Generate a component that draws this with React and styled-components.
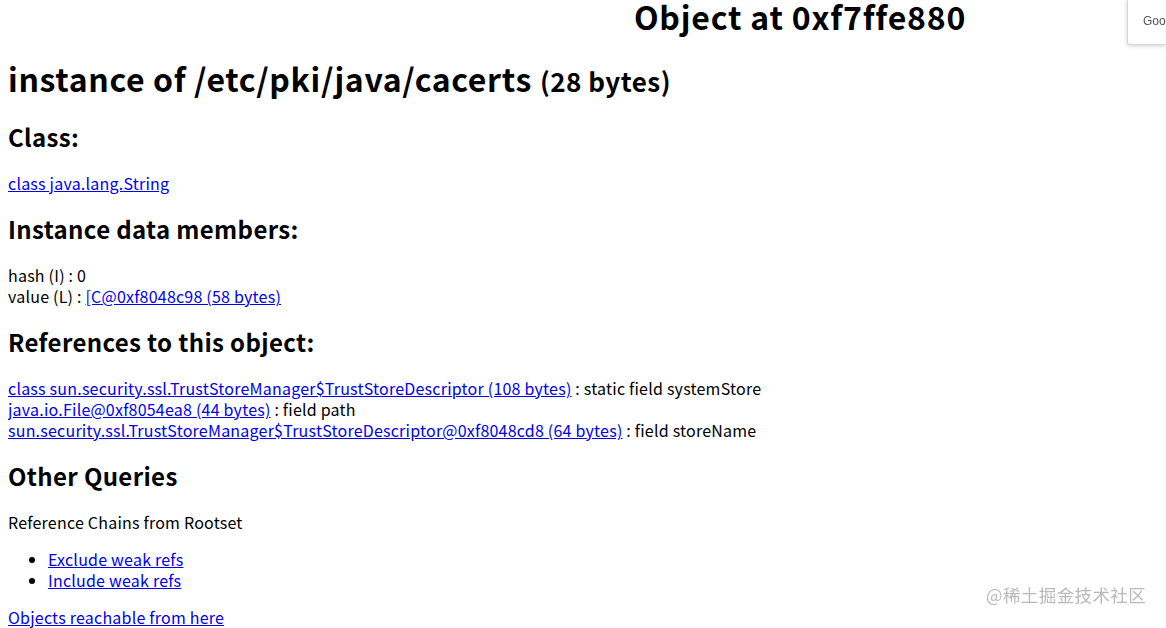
import React from "react";
import styled, { createGlobalStyle } from "styled-components";

const Global = createGlobalStyle`
  html, body { margin: 0; padding: 0; background: #fff; }
  body {
    margin: 0 8px;
    font-family: "Noto Sans CJK SC", "Noto Sans", sans-serif;
    font-size: 16px;
    line-height: 21px;
    letter-spacing: 0.22px;
    color: #000;
    overflow: hidden;
  }
`;

const Page = styled.div`
  position: relative;
  min-height: 628px;
  padding-top: 1px;
`;

const TopTitle = styled.h1`
  margin: -6px 0 0;
  padding-left: 434px;
  text-align: center;
  font-size: 32px;
  line-height: 42px;
  font-weight: 700;
  letter-spacing: 0.8px;
`;

const Title = styled.h1`
  margin: 20px 0 17px;
  font-size: 32px;
  line-height: 42px;
  font-weight: 700;
  letter-spacing: 0.65px;
`;

const Small = styled.small`
  font-size: 26px;
  letter-spacing: 0.5px;
`;

const Heading = styled.h2`
  margin: 19px 0 20px;
  font-size: 24px;
  line-height: 32px;
  font-weight: 700;
  letter-spacing: 0.35px;
`;

const Link = styled.a`
  color: #0000ee;
  text-decoration: underline;
`;

const List = styled.ul`
  margin: 16px 0;
  padding-left: 40px;
  list-style: disc;
`;

const TranslateBox = styled.div`
  position: fixed;
  top: -2px;
  right: 0;
  width: 39px;
  height: 47px;
  background: #fff;
  border: 1px solid #d6d6d6;
  border-right: none;
  border-radius: 3px 0 0 3px;
  box-shadow: 0 1px 4px rgba(0,0,0,0.18);
  font-family: "Liberation Sans", Arial, sans-serif;
  font-size: 12px;
  letter-spacing: 0;
  color: #555;
  display: flex;
  align-items: center;
  padding-left: 15px;
  box-sizing: border-box;
  overflow: hidden;
  white-space: nowrap;
`;

const Watermark = styled.div`
  position: fixed;
  left: 986px;
  top: 584px;
  font-family: "Noto Sans CJK SC", sans-serif;
  font-size: 17.5px;
  color: #b9b9b9;
  letter-spacing: 0.4px;
`;

export default function App() {
  return (
    <>
      <Global />
      <Page>
        <TopTitle>Object at 0xf7ffe880</TopTitle>
        <Title>
          instance of /etc/pki/java/cacerts <Small>(28 bytes)</Small>
        </Title>

        <Heading>Class:</Heading>
        <Link href="#">class java.lang.String</Link>
        <br />

        <Heading>Instance data members:</Heading>
        hash (I) : 0
        <br />
        value (L) : <Link href="#">[C@0xf8048c98 (58 bytes)</Link>
        <br />

        <Heading>References to this object:</Heading>
        <Link href="#">class sun.security.ssl.TrustStoreManager$TrustStoreDescriptor (108 bytes)</Link> : static field systemStore
        <br />
        <Link href="#">java.io.File@0xf8054ea8 (44 bytes)</Link> : field path
        <br />
        <Link href="#">sun.security.ssl.TrustStoreManager$TrustStoreDescriptor@0xf8048cd8 (64 bytes)</Link> : field storeName
        <br />

        <Heading>Other Queries</Heading>
        Reference Chains from Rootset
        <List>
          <li><Link href="#">Exclude weak refs</Link></li>
          <li><Link href="#">Include weak refs</Link></li>
        </List>
        <Link href="#">Objects reachable from here</Link>

        <TranslateBox>Google</TranslateBox>
        <Watermark>@稀土掘金技术社区</Watermark>
      </Page>
    </>
  );
}
